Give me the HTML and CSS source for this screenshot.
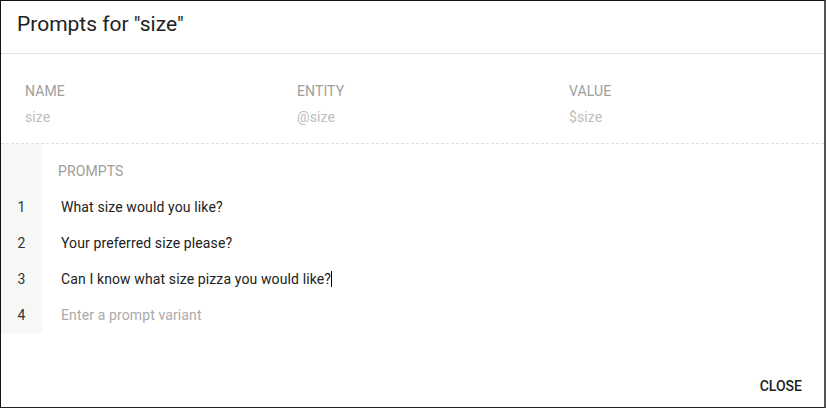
FILE: index.html
```html
<!DOCTYPE html>
<html>
<head>
<meta charset="utf-8">
<link rel="stylesheet" href="styles.css">
</head>
<body>
<div class="dialog">
  <header class="head"><h1 class="title">Prompts for "size"</h1></header>
  <section class="fields">
    <div class="field"><div class="label">NAME</div><div class="value">size</div></div>
    <div class="field"><div class="label">ENTITY</div><div class="value">@size</div></div>
    <div class="field"><div class="label">VALUE</div><div class="value">$size</div></div>
  </section>
  <section class="prompts">
    <div class="gutter"></div><div class="plabel">PROMPTS</div>
    <div class="gutter num">1</div><div class="ptext">What size would you like?</div>
    <div class="gutter num">2</div><div class="ptext">Your preferred size please?</div>
    <div class="gutter num">3</div><div class="ptext">Can I know what size pizza you would like?<span class="caret"></span></div>
    <div class="gutter num">4</div><div class="ptext placeholder">Enter a prompt variant</div>
  </section>
  <footer class="foot"><button class="close">CLOSE</button></footer>
</div>
</body>
</html>
```
FILE: styles.css
```css
html, body { margin: 0; padding: 0; background: #fff; }
.dialog {
  width: 826px; height: 408px; box-sizing: border-box;
  border-top: 1px solid #111; border-left: 1px solid #111;
  border-right: 2px solid #555; border-bottom: 1px solid #222;
  display: flex; flex-direction: column;
  font-family: Roboto, "Liberation Sans", sans-serif;
  color: #212121;
}
.head { padding: 11px 16px 0; height: 53px; box-sizing: border-box; border-bottom: 1px solid #e0e0e0; }
.title { margin: 0; font-size: 21px; font-weight: 400; line-height: 24px; color: #212121; }
.fields { display: grid; grid-template-columns: 272px 272px 1fr; padding: 27px 24px 16px; border-bottom: 1px dashed #e2e2e2; }
.label { font-size: 14px; line-height: 20px; color: #9e9e9e; letter-spacing: 0.1px; }
.value { font-size: 14px; line-height: 20px; color: #bdbdbd; margin-top: 6px; letter-spacing: 0.1px; }
.prompts { display: grid; grid-template-columns: 41px 1fr; grid-auto-rows: 36px; grid-template-rows: 45px; }
.gutter { background: #f6f8f6; }
.num { font-size: 14px; color: #333; text-align: center; line-height: 36px; }
.plabel { font-size: 14px; color: #9e9e9e; padding: 17px 0 0 16px; line-height: 20px; letter-spacing: 0.1px; }
.ptext { font-size: 14px; line-height: 36px; padding-left: 19px; color: #212121; letter-spacing: 0.12px; }
.placeholder { color: #aaa; }
.caret { display: inline-block; width: 1px; height: 16px; background: #000; vertical-align: -3px; }
.foot { flex: 1; display: flex; justify-content: flex-end; align-items: flex-end; padding: 0 14px 5px 0; }
.close { background: none; border: 0; font-family: inherit; font-size: 14px; font-weight: 500; color: #212121; padding: 6px 8px; line-height: 20px; letter-spacing: 0; }
```
